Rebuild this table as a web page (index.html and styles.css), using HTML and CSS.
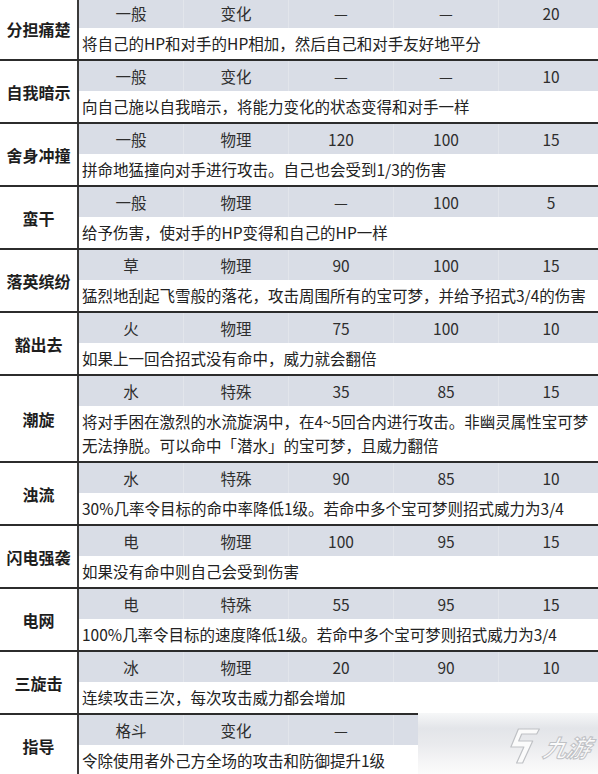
FILE: index.html
```html
<!DOCTYPE html>
<html lang="zh-CN">
<head>
<meta charset="utf-8">
<title>招式表</title>
<link rel="stylesheet" href="styles.css">
</head>
<body>
<div class="table">
  <div class="row">
    <div class="name">分担痛楚</div>
    <div class="body">
      <div class="stats"><span>一般</span><span>变化</span><span>—</span><span>—</span><span>20</span></div>
      <div class="desc">将自己的HP和对手的HP相加，然后自己和对手友好地平分</div>
    </div>
  </div>
  <div class="row">
    <div class="name">自我暗示</div>
    <div class="body">
      <div class="stats"><span>一般</span><span>变化</span><span>—</span><span>—</span><span>10</span></div>
      <div class="desc">向自己施以自我暗示，将能力变化的状态变得和对手一样</div>
    </div>
  </div>
  <div class="row">
    <div class="name">舍身冲撞</div>
    <div class="body">
      <div class="stats"><span>一般</span><span>物理</span><span>120</span><span>100</span><span>15</span></div>
      <div class="desc">拼命地猛撞向对手进行攻击。自己也会受到1/3的伤害</div>
    </div>
  </div>
  <div class="row">
    <div class="name">蛮干</div>
    <div class="body">
      <div class="stats"><span>一般</span><span>物理</span><span>—</span><span>100</span><span>5</span></div>
      <div class="desc">给予伤害，使对手的HP变得和自己的HP一样</div>
    </div>
  </div>
  <div class="row">
    <div class="name">落英缤纷</div>
    <div class="body">
      <div class="stats"><span>草</span><span>物理</span><span>90</span><span>100</span><span>15</span></div>
      <div class="desc">猛烈地刮起飞雪般的落花，攻击周围所有的宝可梦，并给予招式3/4的伤害</div>
    </div>
  </div>
  <div class="row">
    <div class="name">豁出去</div>
    <div class="body">
      <div class="stats"><span>火</span><span>物理</span><span>75</span><span>100</span><span>10</span></div>
      <div class="desc">如果上一回合招式没有命中，威力就会翻倍</div>
    </div>
  </div>
  <div class="row">
    <div class="name">潮旋</div>
    <div class="body">
      <div class="stats"><span>水</span><span>特殊</span><span>35</span><span>85</span><span>15</span></div>
      <div class="desc">将对手困在激烈的水流旋涡中，在4~5回合内进行攻击。非幽灵属性宝可梦<br>无法挣脱。可以命中「潜水」的宝可梦，且威力翻倍</div>
    </div>
  </div>
  <div class="row">
    <div class="name">浊流</div>
    <div class="body">
      <div class="stats"><span>水</span><span>特殊</span><span>90</span><span>85</span><span>10</span></div>
      <div class="desc">30%几率令目标的命中率降低1级。若命中多个宝可梦则招式威力为3/4</div>
    </div>
  </div>
  <div class="row">
    <div class="name">闪电强袭</div>
    <div class="body">
      <div class="stats"><span>电</span><span>物理</span><span>100</span><span>95</span><span>15</span></div>
      <div class="desc">如果没有命中则自己会受到伤害</div>
    </div>
  </div>
  <div class="row">
    <div class="name">电网</div>
    <div class="body">
      <div class="stats"><span>电</span><span>特殊</span><span>55</span><span>95</span><span>15</span></div>
      <div class="desc">100%几率令目标的速度降低1级。若命中多个宝可梦则招式威力为3/4</div>
    </div>
  </div>
  <div class="row">
    <div class="name">三旋击</div>
    <div class="body">
      <div class="stats"><span>冰</span><span>物理</span><span>20</span><span>90</span><span>10</span></div>
      <div class="desc">连续攻击三次，每次攻击威力都会增加</div>
    </div>
  </div>
  <div class="row">
    <div class="name">指导</div>
    <div class="body">
      <div class="stats"><span>格斗</span><span>变化</span><span>—</span><span>—</span><span>20</span></div>
      <div class="desc">令除使用者外己方全场的攻击和防御提升1级</div>
    </div>
  </div>
</div>
<div class="watermark">
  <svg class="wm-mark" width="30" height="36" viewBox="0 0 30 36">
    <path d="M8 1 H29 L27 6 H12 L10 13 H24 L17 35 H11 L16 19 H3 Z" fill="#fbfbfb" stroke="#bfc1c5" stroke-width="1.2" stroke-linejoin="round"/>
  </svg>
  <span class="wm-text">九游</span>
</div>
</body>
</html>
```

FILE: styles.css
```css
html, body {
  margin: 0;
  padding: 0;
  background: #ffffff;
  overflow: hidden;
}

body {
  width: 598px;
  height: 774px;
  position: relative;
  font-family: "Noto Sans CJK SC", "Microsoft YaHei", "Noto Sans", sans-serif;
  color: #222222;
}

.table {
  width: 606px;
  margin-top: -4px;
}

.row {
  display: grid;
  grid-template-columns: 79px 1fr;
  border-top: 2px solid #2c2c2c;
}

.name {
  display: flex;
  align-items: center;
  justify-content: center;
  border-right: 2px solid #3a3a3a;
  font-size: 16px;
  font-weight: 700;
  color: #1e1e1e;
}

.body {
  display: flex;
  flex-direction: column;
}

.stats {
  display: grid;
  grid-template-columns: repeat(5, 105px);
  height: 30px;
  background: #d9dde6;
}

.stats span {
  text-align: center;
  line-height: 30px;
  font-size: 15.5px;
  color: #2e2e2e;
  border-right: 1px solid #e2e5eb;
}

.desc {
  padding: 3px 0 4px 3px;
  line-height: 24px;
  font-size: 15.5px;
  color: #222222;
  white-space: nowrap;
}

.watermark {
  position: absolute;
  left: 418px;
  top: 713px;
  width: 180px;
  height: 61px;
  background: linear-gradient(180deg, #f6f7f8 0%, #e3e5e9 25%, #e9eaed 50%, #f5f5f6 80%, #fbfbfb 100%);
  display: flex;
  align-items: center;
  padding-left: 90px;
  box-sizing: border-box;
  gap: 6px;
}

.wm-mark {
  transform: skewX(-8deg);
  margin-top: 4px;
}

.wm-text {
  font-family: "Noto Sans CJK SC", sans-serif;
  font-size: 24px;
  font-weight: 700;
  font-style: italic;
  color: #fbfbfb;
  -webkit-text-stroke: 1px #bfc1c5;
  transform: skewX(-12deg);
  display: inline-block;
  margin-top: 6px;
  letter-spacing: -1px;
}
```
